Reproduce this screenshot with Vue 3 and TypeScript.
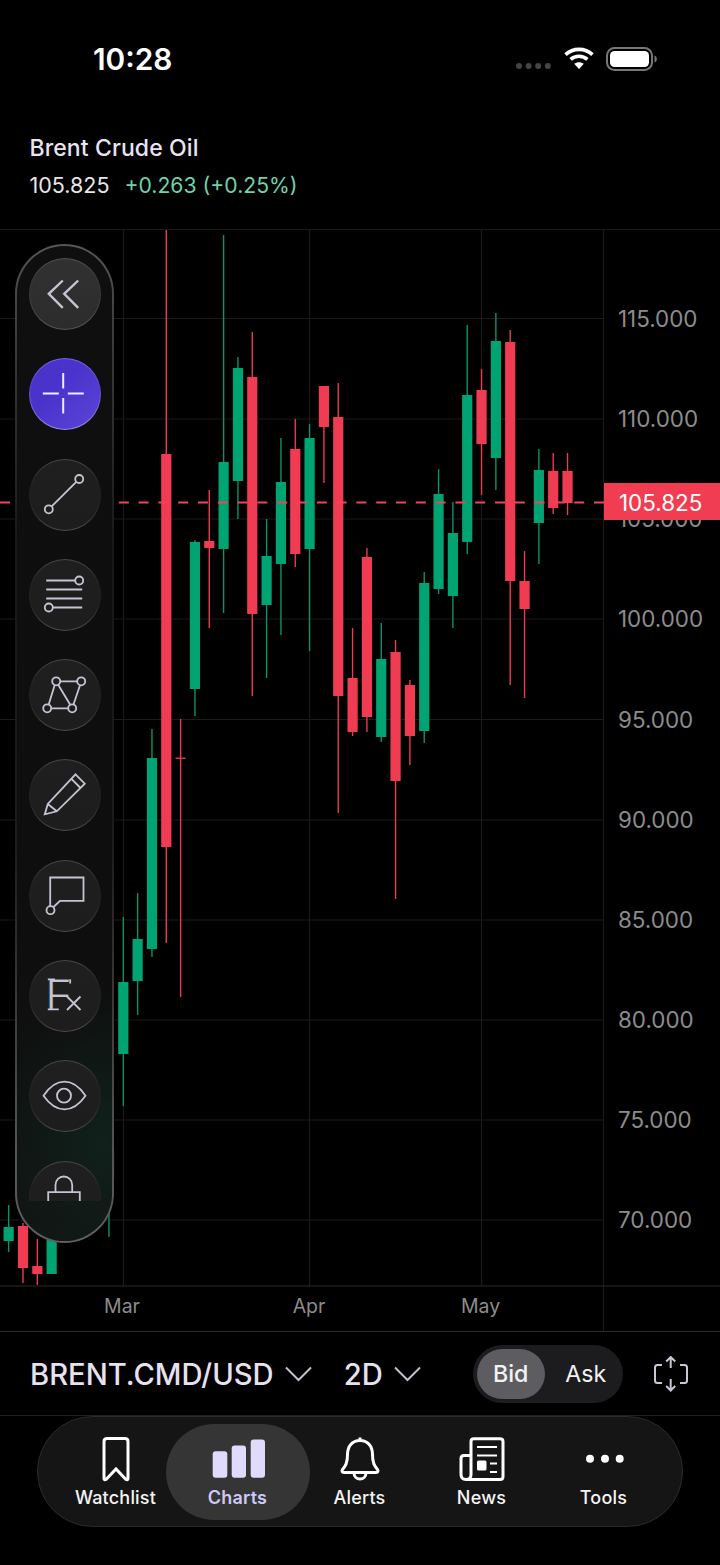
<script setup lang="ts">
interface Candle { i: number; up: boolean; top: number; bottom: number; hi: number; lo: number }
type Row = [number, 0 | 1, number, number, number, number]

const rows: Row[] = [
  [-8, 1, 1227, 1241, 1205, 1252], [-7, 0, 1226, 1268, 1223, 1283], [-6, 0, 1266, 1274, 1239, 1285],
  [-5, 1, 1240, 1274, 1230, 1274], [-1, 1, 1150, 1180, 1130, 1237],
  [0, 1, 982, 1054, 917, 1106], [1, 1, 939, 981, 893, 1015], [2, 1, 758, 949, 729, 957],
  [3, 0, 454, 847, 230, 943], [4, 0, 757.6, 758.9, 719, 997], [5, 1, 542, 689, 540, 716],
  [6, 0, 541, 548, 490, 628], [7, 1, 462, 549, 235, 613], [8, 1, 368, 481, 357, 519],
  [9, 0, 377, 614, 332, 696], [10, 1, 556, 605, 519, 678], [11, 1, 482, 564, 438, 635],
  [12, 0, 449, 554, 419, 567], [13, 1, 438, 549, 424, 651], [14, 0, 386, 427, 386, 483],
  [15, 0, 417, 696, 383, 813], [16, 0, 678, 732, 628, 736], [17, 0, 557, 717, 548, 732],
  [18, 1, 659, 737, 623, 742], [19, 0, 652, 781, 640, 899], [20, 0, 685, 736, 680, 765],
  [21, 1, 583, 731, 572, 743], [22, 1, 494, 589, 469, 594], [23, 1, 533, 596, 502, 628],
  [24, 1, 395, 542, 325, 554], [25, 0, 390, 444, 369, 495], [26, 1, 341, 458, 313, 490],
  [27, 0, 342, 581, 330, 685], [28, 0, 581, 609, 551, 698], [29, 1, 470, 523, 449, 564],
  [30, 0, 471, 508, 453, 514], [31, 0, 471, 503, 453, 515],
]
const candles: Candle[] = rows.map(([i, up, top, bottom, hi, lo]) => ({ i, up: up === 1, top, bottom, hi, lo }))

const CHART_TOP = 229
const cx = (i: number): number => 123.3 + i * 14.33
const cy = (y: number): number => y - CHART_TOP

const gridYs: number[] = [318.5, 419, 519, 619, 719.5, 820, 920, 1020, 1120, 1220]
const gridXs: number[] = [123.5, 309.5, 481.5]
const prices: string[] = ['115.000', '110.000', '105.000', '100.000', '95.000', '90.000', '85.000', '80.000', '75.000', '70.000']
const months: { label: string; x: number }[] = [
  { label: 'Mar', x: 122 }, { label: 'Apr', x: 309 }, { label: 'May', x: 480.5 },
]
const tools: string[] = ['back', 'cross', 'line', 'lines', 'poly', 'pencil', 'note', 'fx', 'eye', 'lock']
const tabs: { id: string; label: string }[] = [
  { id: 'watch', label: 'Watchlist' }, { id: 'charts', label: 'Charts' }, { id: 'alerts', label: 'Alerts' },
  { id: 'news', label: 'News' }, { id: 'tools', label: 'Tools' },
]
</script>

<template>
  <div class="screen">
    <div class="status">
      <span class="time">10:28</span>
      <div class="status-right">
        <svg class="signal" width="35" height="8" viewBox="0 0 35 8">
          <circle cx="3" cy="4" r="3" /><circle cx="12.6" cy="4" r="3" /><circle cx="22.2" cy="4" r="3" /><circle cx="31.8" cy="4" r="3" />
        </svg>
        <svg class="wifi" width="30" height="22" viewBox="0 0 30 22" fill="none" stroke="#fff" stroke-width="3.6">
          <path d="M1.5 7.6C9 .6 21 .6 28.5 7.6" />
          <path d="M6.6 12.4c4.7-4.2 12.100-4.200 16.800 0" />
          <path d="M15 22l-4.800-5.200c2.800-2.200 6.800-2.200 9.600 0z" fill="#fff" stroke="none" />
        </svg>
        <svg class="battery" width="51" height="24" viewBox="0 0 51 24">
          <rect x="1" y="1" width="45" height="22" rx="7.500" fill="none" stroke="#777" stroke-width="2" />
          <rect x="4" y="4" width="39" height="16" rx="4.500" fill="#fff" />
          <path d="M48.500 8.500c1.500.4 2.300 1.800 2.300 3.500s-.8 3.100-2.300 3.500z" fill="#777" />
        </svg>
      </div>
    </div>

    <header class="head">
      <div class="name">Brent Crude Oil</div>
      <div class="quote"><span>105.825</span><span class="gain">+0.263 (+0.25%)</span></div>
    </header>

    <section class="chart">
      <svg class="plot" width="720" height="1102" viewBox="0 0 720 1102">
        <line x1="0" x2="720" y1="0.5" y2="0.5" class="grid" />
        <line v-for="y in gridYs" :key="y" x1="0" x2="603" :y1="cy(y)" :y2="cy(y)" class="grid" />
        <line v-for="x in gridXs" :key="x" :x1="x" :x2="x" y1="0" y2="1057" class="grid" />
        <line x1="603.500" x2="603.500" y1="0" y2="1102" class="grid" />
        <line x1="0" x2="720" y1="1057" y2="1057" class="axis-line" />
        <g v-for="c in candles" :key="c.i">
          <rect :x="cx(c.i) - 0.7" :width="1.4" :y="cy(c.hi)" :height="c.lo - c.hi" :class="c.up ? 'wick-up' : 'wick-down'" />
          <rect :x="cx(c.i) - 5.1" :width="10.2" :y="cy(c.top)" :height="c.bottom - c.top" :class="c.up ? 'up' : 'down'" />
        </g>
        <line x1="0" x2="604" y1="273.500" y2="273.500" class="last-line" />
        <text v-for="(p, n) in prices" :key="p" x="618" :y="cy(gridYs[n]) + 8" class="price">{{ p }}</text>
        <text v-for="m in months" :key="m.label" :x="m.x" y="1084" text-anchor="middle" class="month">{{ m.label }}</text>
      </svg>
      <div class="tag">105.825</div>

      <aside class="rail">
        <div class="rail-scroll">
          <div v-for="t in tools" :key="t" class="tool" :class="{ first: t === 'back', on: t === 'cross' }">
            <svg width="72" height="72" viewBox="0 0 72 72" fill="none" class="tool-ico">
              <template v-if="t === 'back'">
                <path d="M34.800 22.500 20.800 35.800l14 14M50.200 22.500 36.200 35.800l14 14" stroke-width="2.400" />
              </template>
              <template v-else-if="t === 'cross'">
                <path d="M14.800 35.500h16M39.800 35.500h16M35.200 15v15.600M35.200 40v15.600" stroke="#f1eeff" stroke-width="2" />
              </template>
              <template v-else-if="t === 'line'">
                <path d="M23.700 48.400 48.300 23.900" />
                <circle cx="51.200" cy="21" r="4" /><circle cx="20.800" cy="51.300" r="4" />
              </template>
              <template v-else-if="t === 'lines'">
                <path d="M18.200 22.500h29M18.200 31.500h36M18.200 40.500h36M24.800 49.500h29.400" />
                <circle cx="51.200" cy="22.500" r="4" /><circle cx="20.800" cy="49.500" r="4" />
              </template>
              <template v-else-if="t === 'poly'">
                <path d="M32.200 22.300h17M26.700 26 20.700 45.600M30.200 25.800l12 20M52 26.200 45.500 45.500M23.200 49.300h17" />
                <circle cx="28.200" cy="22.300" r="4" /><circle cx="53.200" cy="22.300" r="4" /><circle cx="19.200" cy="49.300" r="4" /><circle cx="44.200" cy="49.300" r="4" />
              </template>
              <template v-else-if="t === 'pencil'">
                <path d="M47.500 15.300 56.800 24.700 28.800 52.300 16.800 55.300 19.800 45ZM43.200 19.700 52.500 29M19.800 45 28.800 52.300" />
              </template>
              <template v-else-if="t === 'note'">
                <path d="M22.200 47V18.500H55.500V41.800H32L25.500 48" />
                <circle cx="22.500" cy="51.200" r="4" />
              </template>
              <template v-else-if="t === 'fx'">
                <text x="16.500" y="50" class="fx-f">F</text>
                <path d="M19.800 19.300H27M42.200 19.300V23.500M19.800 49.300H30.800M39 36.500 52.500 50M52.500 36.500 39 50" />
              </template>
              <template v-else-if="t === 'eye'">
                <path d="M15.500 35.700C22 26 29 21.700 36.500 21.700S51 26 57.500 35.700C51 45 44 49.300 36.500 49.300S22 45 15.500 35.700Z" />
                <circle cx="36" cy="35.700" r="7" />
              </template>
              <template v-else>
                <path d="M27.500 32.200V25c0-5 3.700-8.500 8.300-8.500s8.400 3.500 8.400 8.500v7.200M20.200 45V32.200H51.800V45" />
              </template>
            </svg>
          </div>
        </div>
      </aside>
    </section>

    <div class="controls">
      <button class="pick symbol">BRENT.CMD/USD
        <svg width="27" height="16" viewBox="0 0 27 16" fill="none"><path d="M1 1.500 13.500 14 26 1.500" /></svg>
      </button>
      <button class="pick period">2D
        <svg width="27" height="16" viewBox="0 0 27 16" fill="none"><path d="M1 1.500 13.500 14 26 1.500" /></svg>
      </button>
      <div class="seg">
        <span class="seg-item sel">Bid</span>
        <span class="seg-item ask">Ask</span>
      </div>
      <svg class="expand" width="34" height="36" viewBox="0 0 34 36" fill="none">
        <path d="M8 9H3.500Q1 9 1 11.500V24.500Q1 27 3.500 27H8M26 9H30.500Q33 9 33 11.500V24.500Q33 27 30.500 27H26M16.700 12V1M12.200 5.500 16.700 1 21.200 5.500M16.700 23V34.500M12.200 30 16.700 34.500 21.200 30" />
      </svg>
    </div>

    <nav class="tabs">
      <div v-for="t in tabs" :key="t.id" class="tab" :class="[t.id, { active: t.id === 'charts' }]">
        <svg width="46" height="46" viewBox="0 0 46 46" fill="none" class="tab-ico">
          <path v-if="t.id === 'watch'" d="M11 5.500Q11 2.500 14 2.500H32Q35 2.500 35 5.500V42.500Q35 44.500 33 43.500L23 33 13 43.500Q11 44.500 11 42.500Z" />
          <template v-else-if="t.id === 'charts'">
            <rect x="-2.300" y="15.200" width="14.600" height="26.600" rx="3" class="bar" />
            <rect x="16.700" y="9.500" width="14.300" height="32.300" rx="3" class="bar" />
            <rect x="35.700" y="3.500" width="14.300" height="38.300" rx="3" class="bar" />
          </template>
          <template v-else-if="t.id === 'alerts'">
            <path d="M23 4.500C15 4.500 10.500 10.500 10.500 18.500 10.500 27 8.500 30 5.500 33.500 4.500 35 5 36.500 7 36.500H39C41 36.500 41.500 35 40.500 33.500 37.500 30 35.500 27 35.500 18.500 35.500 10.500 31 4.500 23 4.500ZM23 1.500V4.500M17 37C17 45 29 45 29 37" />
          </template>
          <template v-else-if="t.id === 'news'">
            <path d="M12 36V5.500Q12 2.700 14.800 2.700H41Q44 2.700 44 5.500V40.500Q44 43.500 41 43.500H7Q2 43.500 2 38.500V22.500Q2 19.500 5 19.500H12M12 36V38.500Q12 43.500 7 43.500" />
            <path d="M18 11H38M18 19.500H38M31 27.500H38M31 36H38" stroke-width="2.200" />
            <rect x="18" y="24.500" width="9.500" height="10" rx="1.500" fill="currentColor" stroke="none" />
          </template>
          <template v-else>
            <circle cx="9" cy="22.800" r="4" class="dot" /><circle cx="24" cy="22.800" r="4" class="dot" /><circle cx="38.700" cy="22.800" r="4" class="dot" />
          </template>
        </svg>
        <span class="tab-label">{{ t.label }}</span>
      </div>
    </nav>
  </div>
</template>

<style scoped>
.screen {
  width: 720px;
  height: 1565px;
  background: #000;
  overflow: hidden;
  font-family: Inter, "Liberation Sans", sans-serif;
  color: #e8e4f2;
}
.status {
  height: 118px;
  display: flex;
  justify-content: space-between;
  align-items: flex-start;
  padding: 41px 63px 0 93px;
  box-sizing: border-box;
}
.time { font-size: 29.800px; font-weight: 600; line-height: 36px; color: #fff; }
.status-right { display: flex; align-items: flex-start; padding-top: 6px; }
.signal { fill: #454545; margin: 15px 13px 0 0; }
.wifi { margin-right: 12px; }
.head { height: 111px; padding-left: 29.500px; box-sizing: border-box; padding-top: 15px; }
.name { font-size: 23px; font-weight: 500; line-height: 30px; letter-spacing: 0.100px; }
.quote { display: flex; gap: 15px; font-size: 21.500px; line-height: 28px; margin-top: 8px; color: #e6e6e6; }
.gain { color: #6fd2a8; font-size: 21.200px; }
.chart { position: relative; height: 1102px; border-bottom: 1px solid #2a2a2a; box-sizing: content-box; }
.plot { display: block; }
.grid { stroke: #1b1b1b; stroke-width: 1.200; }
.axis-line { stroke: #2a2a2a; stroke-width: 1; }
.up { fill: #00a372; }
.down { fill: #f03c52; }
.wick-up { fill: #0a9268; }
.wick-down { fill: #ec3a50; }
.last-line { stroke: #f5405a; stroke-width: 1.800; stroke-dasharray: 10 9.800; }
.price { font-family: Inter, "Liberation Sans", sans-serif; font-size: 22.400px; fill: #8c8c8c; }
.month { font-family: Inter, "Liberation Sans", sans-serif; font-size: 19.500px; fill: #8c8c8c; }
.tag {
  position: absolute;
  left: 604px;
  top: 254px;
  width: 116px;
  height: 37px;
  background: #f03d52;
  color: #fff;
  font-size: 22.400px;
  line-height: 39px;
  padding-left: 15px;
  box-sizing: border-box;
}
.rail {
  position: absolute;
  left: 15px;
  top: 15px;
  width: 99px;
  height: 999px;
  box-sizing: border-box;
  border: 2px solid transparent;
  border-radius: 50px;
  background:
    radial-gradient(110px 150px at 90% 90%, #10201a 0%, rgba(16, 32, 26, 0) 100%) padding-box,
    linear-gradient(180deg, #0f0f0f 0%, #0e0e0e 72%, #111513 100%) padding-box,
    linear-gradient(180deg, #565656 0%, #3e3e3e 8%, #181818 30%, #1c1c1c 60%, #505050 88%, #5e5e5e 100%) border-box;
  padding-top: 12px;
  display: flex;
  justify-content: center;
}
.rail-scroll {
  height: 943px;
  overflow: hidden;
  display: flex;
  flex-direction: column;
  gap: 28.300px;
  align-items: center;
  width: 72px;
}
.tool {
  width: 72px;
  height: 72px;
  flex: none;
  box-sizing: border-box;
  border: 1.500px solid transparent;
  border-radius: 50%;
  position: relative;
  background:
    linear-gradient(180deg, #1f1f1f, #1d1d1d) padding-box,
    linear-gradient(180deg, #474747 0%, #232323 35%, #232323 60%, #4c4c4c 100%) border-box;
}
.tool.first {
  background:
    linear-gradient(180deg, #313131, #2c2c2c) padding-box,
    linear-gradient(180deg, #505050 0%, #363636 40%, #565656 100%) border-box;
}
.tool.on {
  background:
    linear-gradient(135deg, #4a33cb 40%, #5b45d6 100%) padding-box,
    linear-gradient(180deg, #7666df 0%, #5a46d4 40%, #9b8eee 100%) border-box;
}
.tool-ico { position: absolute; left: -1.500px; top: -1.500px; stroke: #c6c3d3; stroke-width: 1.800; }
.fx-f {
  font-family: "Liberation Mono", monospace;
  font-size: 47px;
  fill: #c6c3d3;
  stroke: #1f1f1f;
  stroke-width: 1.200;
}
.controls {
  height: 83px;
  display: flex;
  align-items: center;
  padding-left: 30px;
  position: relative;
  border-bottom: 1px solid #222;
}
.pick {
  all: unset;
  display: flex;
  align-items: center;
  font-size: 29.200px;
  font-weight: 500;
  color: #e6e2f0;
  line-height: 36px;
  flex: none;
  padding-top: 2px;
}
.pick svg { stroke: #c3c0cc; stroke-width: 2; margin-left: 11px; margin-top: -2px; }
.symbol { margin-right: 32px; }
.seg {
  margin-left: 52px;
  width: 150px;
  height: 58px;
  border-radius: 29px;
  background: #1c1c1e;
  display: flex;
  align-items: center;
  padding: 4px;
  box-sizing: border-box;
  flex: none;
}
.seg-item {
  width: 68px;
  height: 50px;
  border-radius: 25px;
  font-size: 23.200px;
  font-weight: 500;
  line-height: 50px;
  text-align: center;
  color: #f2f2f2;
  box-sizing: border-box;
}
.ask { width: 74px; padding-left: 8px; font-weight: 400; }
.sel { background: #5d5d61; }
.expand { margin-left: 31px; stroke: #c9c6d6; stroke-width: 2; flex: none; }
.tabs {
  position: relative;
  margin: 0 0 0 37px;
  width: 646px;
  height: 111px;
  box-sizing: border-box;
  border: 1.500px solid #2b2b2b;
  border-radius: 56px;
  background: #151515;
  display: flex;
  padding-left: 16.500px;
}
.tab {
  width: 122px;
  height: 96px;
  margin-top: 6.500px;
  display: flex;
  flex-direction: column;
  align-items: center;
  flex: none;
  color: #fff;
  position: relative;
}
.tab.charts { width: 144px; border-radius: 48px; background: #353535; margin-left: -11px; margin-right: -11px; }
.tab-ico { stroke: currentColor; stroke-width: 3; margin-top: 12.500px; flex: none; overflow: visible; }
.bar { fill: #e0dbfd; stroke: none; }
.dot { fill: #fff; stroke: none; }
.tab-label { font-size: 18px; font-weight: 450; line-height: 24px; margin-top: 3.500px; letter-spacing: 0.200px; color: #f4f4f4; }
.tab.active .tab-label { color: #cfc8f6; font-weight: 600; }
</style>
